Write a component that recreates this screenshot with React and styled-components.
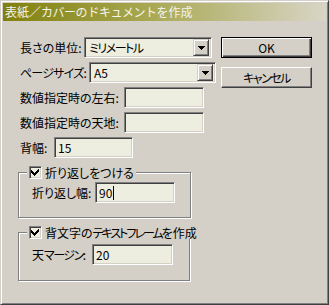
import React from 'react';
import styled, { createGlobalStyle } from 'styled-components';

const Global = createGlobalStyle`
  html, body { margin: 0; padding: 0; background: #d4d0c8; }
  body {
    font-family: "Noto Sans CJK JP", "Noto Sans CJK SC", sans-serif;
    font-size: 12px;
    font-variant-east-asian: proportional-width;
    font-feature-settings: "palt" 1;
    color: #000;
  }
  * { box-sizing: border-box; }
`;

const Window = styled.div`
  width: 329px;
  height: 305px;
  background: #d4d0c8;
  border: 1px solid;
  border-color: #d4d0c8 #404040 #404040 #d4d0c8;
  box-shadow: inset 1px 1px 0 #fff, inset -1px -1px 0 #808080;
  padding: 2px;
  display: flex;
  flex-direction: column;
`;

const TitleBar = styled.div`
  height: 18px;
  line-height: 18px;
  padding-left: 2px;
  color: #f4f4ec;
  font-size: 12px;
  font-variant-east-asian: normal;
  font-feature-settings: normal;
  background: linear-gradient(90deg, #80800e 0%, #a8a852 45%, #d8d5c6 100%);
  white-space: nowrap;
`;

const Kana = styled.span`
  letter-spacing: ${(p) => p.$ls ?? -1}px;
`;

const Body = styled.div`
  display: flex;
  padding: 16px 0 0 15px;
`;

const LeftCol = styled.div`
  width: 198px;
  display: flex;
  flex-direction: column;
`;

const RightCol = styled.div`
  margin-left: 5px;
  display: flex;
  flex-direction: column;
  gap: 9px;
`;

const Row = styled.div`
  display: flex;
  align-items: center;
  height: 21px;
  margin-left: ${(p) => p.$indent ?? 2}px;
  margin-top: ${(p) => p.$mt ?? 0}px;
`;

const Label = styled.span`
  width: ${(p) => p.$w}px;
  flex: none;
  white-space: nowrap;
  line-height: 14px;
`;

const sunken = `
  border: 1px solid;
  border-color: #808080 #fff #fff #808080;
  box-shadow: inset 1px 1px 0 #404040, inset -1px -1px 0 #d4d0c8;
`;

const Field = styled.div`
  ${sunken}
  width: ${(p) => p.$w}px;
  height: 21px;
  background: #eeeee0;
  display: flex;
  align-items: center;
  padding-left: 3px;
  line-height: 14px;
  white-space: nowrap;
`;

const Select = styled.div`
  ${sunken}
  width: ${(p) => p.$w}px;
  height: 21px;
  background: #eeeee0;
  display: flex;
  align-items: center;
  padding: 2px 2px 2px 4px;
  line-height: 14px;
  white-space: nowrap;
`;

const SelectText = styled.span`
  flex: 1;
`;

const ArrowBtn = styled.div`
  width: 16px;
  height: 17px;
  margin-top: -2px;
  margin-bottom: -2px;
  background: #d4d0c8;
  border: 1px solid;
  border-color: #d4d0c8 #404040 #404040 #d4d0c8;
  box-shadow: inset 1px 1px 0 #fff, inset -1px -1px 0 #808080;
  display: flex;
  align-items: center;
  justify-content: center;
`;

const Button = styled.div`
  width: 91px;
  height: 21px;
  display: flex;
  align-items: center;
  justify-content: center;
  background: #d4d0c8;
  line-height: 14px;
  border: 1px solid;
  border-color: ${(p) => (p.$default ? '#000' : '#fff #404040 #404040 #fff')};
  box-shadow: ${(p) =>
    p.$default
      ? 'inset 1px 1px 0 #fff, inset -1px -1px 0 #404040, inset -2px -2px 0 #808080'
      : 'inset -1px -1px 0 #808080'};
`;

const Group = styled.div`
  position: relative;
  width: ${(p) => p.$w}px;
  height: ${(p) => p.$h}px;
  margin-top: ${(p) => p.$mt}px;
  border: 1px solid #808080;
  box-shadow: inset 1px 1px 0 #fff, 1px 1px 0 #fff;
  padding: ${(p) => p.$pt}px 0 0 13px;
`;

const Legend = styled.div`
  position: absolute;
  top: -7px;
  left: 8px;
  display: flex;
  align-items: center;
  gap: 3px;
  padding: 0 2px;
  background: #d4d0c8;
  line-height: 13px;
  white-space: nowrap;
`;

const CheckBox = styled.div`
  ${sunken}
  width: 13px;
  height: 13px;
  background: #eeeee0;
  display: flex;
  align-items: center;
  justify-content: center;
  flex: none;
`;

const Caret = styled.span`
  display: inline-block;
  width: 1px;
  height: 14px;
  background: #000;
  margin-left: 1px;
`;

const DownArrow = () => (
  <svg width="7" height="4" viewBox="0 0 7 4" shapeRendering="crispEdges">
    <path d="M0 0h7v1h-1v1h-1v1h-1v1h-1v-1h-1v-1h-1v-1h-1z" fill="#000" />
  </svg>
);

const Check = () => (
  <svg width="9" height="9" viewBox="0 0 9 9" shapeRendering="crispEdges">
    <path
      d="M7 1h1v3h-1v1h-1v1h-1v1h-1v1h-1v-1h-1v-1h-1v-1h-1v-3h1v1h1v1h1v1h1v-1h1v-1h1z"
      fill="#000"
    />
  </svg>
);

export default function App() {
  return (
    <>
      <Global />
      <Window>
        <TitleBar>
          表紙／<Kana $ls={-0.5}>カバー</Kana>の<Kana $ls={-0.5}>ドキュメント</Kana>を作成
        </TitleBar>
        <Body>
          <LeftCol>
            <Row>
              <Label $w={64}>長さの単位:</Label>
              <Select $w={128}>
                <SelectText>
                  <Kana $ls={-1.5}>ミリメートル</Kana>
                </SelectText>
                <ArrowBtn>
                  <DownArrow />
                </ArrowBtn>
              </Select>
            </Row>
            <Row $mt={4}>
              <Label $w={69}>
                <Kana $ls={-0.8}>ページサイズ</Kana>:
              </Label>
              <Select $w={127}>
                <SelectText>A5</SelectText>
                <ArrowBtn>
                  <DownArrow />
                </ArrowBtn>
              </Select>
            </Row>
            <Row $mt={4}>
              <Label $w={104}>数値指定時の左右:</Label>
              <Field $w={80} />
            </Row>
            <Row $mt={4}>
              <Label $w={104}>数値指定時の天地:</Label>
              <Field $w={80} />
            </Row>
            <Row $mt={4}>
              <Label $w={34}>背幅:</Label>
              <Field $w={79}>15</Field>
            </Row>

            <Group $w={173} $h={46} $mt={14} $pt={9}>
              <Legend>
                <CheckBox>
                  <Check />
                </CheckBox>
                <span>折り返しをつける</span>
              </Legend>
              <Row $indent={0}>
                <Label $w={63}>折り返し幅:</Label>
                <Field $w={80}>
                  90
                  <Caret />
                </Field>
              </Row>
            </Group>

            <Group $w={172} $h={49} $mt={14} $pt={11}>
              <Legend>
                <CheckBox>
                  <Check />
                </CheckBox>
                <span>
                  背文字の<Kana $ls={-2}>テキストフレーム</Kana>を作成
                </span>
              </Legend>
              <Row $indent={0}>
                <Label $w={60}>
                  天<Kana $ls={-1.5}>マージン</Kana>:
                </Label>
                <Field $w={81}>20</Field>
              </Row>
            </Group>
          </LeftCol>
          <RightCol>
            <Button $default>OK</Button>
            <Button>
              <Kana $ls={-1.5}>キャンセル</Kana>
            </Button>
          </RightCol>
        </Body>
      </Window>
    </>
  );
}
